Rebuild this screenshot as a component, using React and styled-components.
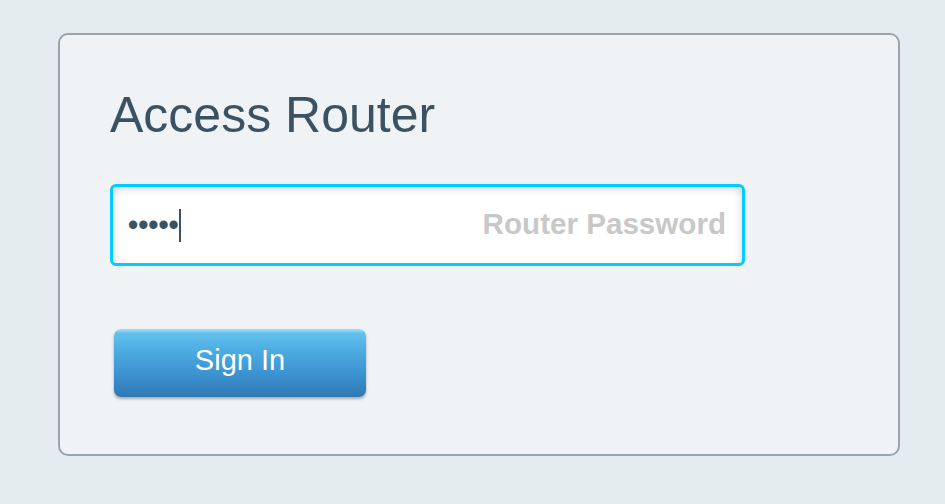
import React from "react";
import styled, { createGlobalStyle } from "styled-components";

const GlobalStyle = createGlobalStyle`
  html, body {
    margin: 0;
    padding: 0;
    background: #e5ecf0;
    font-family: "Liberation Sans", Arial, sans-serif;
  }
`;

const Page = styled.div`
  width: 945px;
  height: 504px;
  padding: 33px 0 0 58px;
  box-sizing: border-box;
`;

const Card = styled.div`
  width: 842px;
  height: 423px;
  box-sizing: border-box;
  border: 2px solid #98a5af;
  border-radius: 10px;
  background: #eff3f6;
  padding: 48px 0 0 50px;
  display: flex;
  flex-direction: column;
`;

const Title = styled.h1`
  margin: 0;
  font-size: 50px;
  font-weight: normal;
  line-height: 64px;
  color: #3b5262;
`;

const Field = styled.div`
  margin-top: 37px;
  width: 635px;
  height: 82px;
  box-sizing: border-box;
  border: 3px solid #00ccff;
  border-radius: 6px;
  background: #fff;
  box-shadow: inset 0 6px 8px -3px rgba(0, 0, 0, 0.12),
    inset 6px 0 8px -4px rgba(0, 0, 0, 0.08),
    inset -6px 0 8px -4px rgba(0, 0, 0, 0.08);
  display: flex;
  align-items: center;
  justify-content: space-between;
  padding: 0 16px 0 15px;
`;

const Value = styled.div`
  display: flex;
  align-items: center;
  font-size: 29px;
  color: #3b5262;
  font-weight: bold;
`;

const Caret = styled.span`
  display: inline-block;
  width: 2px;
  height: 33px;
  background: #3b5262;
`;

const Placeholder = styled.span`
  font-size: 29.6px;
  font-weight: bold;
  color: #c8c8c8;
  padding-bottom: 2px;
`;

const Button = styled.button`
  margin: 63px 0 0 4px;
  width: 252px;
  height: 68px;
  border: none;
  border-radius: 7px;
  background: linear-gradient(
    to bottom,
    #a9e0f8 0%,
    #62c2ee 6%,
    #4ba9e0 35%,
    #3d93d1 65%,
    #2f78b2 100%
  );
  box-shadow: 0 2px 3px rgba(0, 0, 0, 0.3);
  color: #fff;
  font-family: "Liberation Sans", Arial, sans-serif;
  font-size: 29px;
  padding: 0 0 5px;
  cursor: pointer;
`;

export default function App() {
  return (
    <>
      <GlobalStyle />
      <Page>
        <Card>
          <Title>Access Router</Title>
          <Field>
            <Value>
              •••••
              <Caret />
            </Value>
            <Placeholder>Router Password</Placeholder>
          </Field>
          <Button>Sign In</Button>
        </Card>
      </Page>
    </>
  );
}
